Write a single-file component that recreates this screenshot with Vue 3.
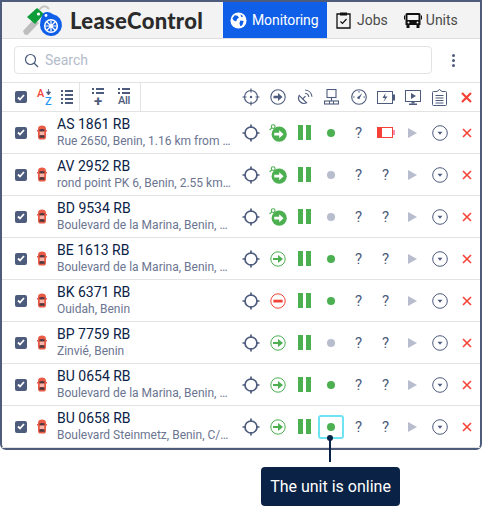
<template>
  <div class="page">
    <!-- shared icons -->
    <svg class="defs" width="0" height="0">
      <symbol id="target" viewBox="0 0 18 18">
        <circle cx="9" cy="9" r="6.5" fill="none" stroke="currentColor" stroke-width="1.2"/>
        <path d="M9 0.5v4M9 13.5v4M0.5 9h4M13.5 9h4" stroke="currentColor" stroke-width="1.2"/>
        <circle cx="9" cy="9" r="1.2" fill="currentColor"/>
      </symbol>
      <symbol id="locate" viewBox="0 0 18 18">
        <circle cx="9" cy="9" r="6" fill="none" stroke="currentColor" stroke-width="1.7"/>
        <path d="M9 0.5v3.5M9 14v3.5M0.5 9h3.5M14 9h3.5" stroke="currentColor" stroke-width="1.7"/>
      </symbol>
      <symbol id="arrow" viewBox="0 0 16 16">
        <circle cx="8" cy="8" r="7.2" fill="none" stroke="currentColor" stroke-width="1.1"/>
        <path d="M3.5 6.7h4.5V4l4.5 4-4.5 4V9.3H3.5z" fill="currentColor"/>
      </symbol>
      <symbol id="moving" viewBox="0 0 18 18">
        <circle cx="4.2" cy="2.6" r="1.9" fill="none" stroke="#4caf50" stroke-width="1.1"/>
        <path d="M2.800 3.800L0.600 6" stroke="#4caf50" stroke-width="1.1"/>
        <circle cx="10.200" cy="10.200" r="7.600" fill="#4caf50"/>
        <path d="M5.200 8.800h5V6.200l4.400 4-4.400 4v-2.600h-5z" fill="#fff"/>
      </symbol>
      <symbol id="stop" viewBox="0 0 16 16">
        <circle cx="8" cy="8" r="7.2" fill="#fff" stroke="#f44336" stroke-width="1"/>
        <rect x="3.4" y="6.7" width="9.2" height="2.8" fill="#f44336"/>
      </symbol>
      <symbol id="moving-out" viewBox="0 0 16 16">
        <circle cx="8" cy="8" r="7.2" fill="#fff" stroke="#4caf50" stroke-width="1"/>
        <path d="M3 6.900h5V4l5 4-5 4V9.100H3z" fill="#4caf50"/>
      </symbol>
      <symbol id="car" viewBox="0 0 10 15">
        <path d="M2.200 1.200Q5 -0.200 7.800 1.200Q9 2 9 4V12Q9 14 7.400 14.500H2.600Q1 14 1 12V4Q1 2 2.200 1.200z" fill="#ea5a45"/>
        <path d="M0 5h1v1.400H0zM9 5h1v1.400H9z" fill="#ea5a45"/>
        <path d="M2.200 4.400Q5 3.400 7.800 4.400L7.200 6.400H2.800z" fill="#4a3a40"/>
        <path d="M2.800 10.200H7.200L7.800 12.400Q5 13.200 2.200 12.400z" fill="#4a3a40"/>
        <rect x="2.800" y="6.600" width="4.400" height="3.400" fill="#f6b5a8"/>
      </symbol>
    </svg>

    <div class="frame">
      <header class="top">
        <div class="brand">
          <svg class="logo" width="42" height="33" viewBox="0 0 42 33">
            <path d="M17 6Q22 -1 27 5" fill="none" stroke="#c4c4c4" stroke-width="2"/>
            <path d="M12 15L1 27l1.500 3.500 3 0.500L17 19z" fill="#bdbdbd"/>
            <path d="M5 13L15 4l7 6-9 10z" fill="#0f9d3a"/>
            <circle cx="16.500" cy="10" r="1.600" fill="#fff"/>
            <path d="M20 12Q21 8 25 8Q28 8 31 10.200A11 11 0 1 1 18 21Q18 16 20 12z" fill="#0f5fe8"/>
            <circle cx="24" cy="11.500" r="1.400" fill="#fff"/>
            <circle cx="29" cy="22" r="6.300" fill="none" stroke="#fff" stroke-width="1.600"/>
            <circle cx="29" cy="22" r="1.700" fill="#fff"/>
            <path d="M29 16.500v11M23.500 22h11M25 18l8 8M33 18l-8 8" stroke="#fff" stroke-width="1.200"/>
          </svg>
          <span class="brand-name">LeaseControl</span>
        </div>
        <nav class="tabs">
          <a class="tab active">
            <svg width="17" height="17" viewBox="0 0 18 18">
              <circle cx="9" cy="9" r="8.500" fill="#fff"/>
              <path d="M5 3.500l3 .5 1.500 2-2 1.500-1 2.500L4 9 2.500 7zM11 9l3.500.5-1.500 4.500-2 1-1-3zM11 2.500l3 2-2 1z" fill="#0f5fe8"/>
            </svg>
            Monitoring
          </a>
          <a class="tab jobs">
            <svg width="15" height="17" viewBox="0 0 15 17">
              <path d="M4 2H1v14h13V2h-3" fill="none" stroke="#111" stroke-width="1.300"/>
              <rect x="4" y="0.500" width="7" height="3" fill="#111"/>
              <path d="M4.500 9.500l2 2 4-4.500" fill="none" stroke="#111" stroke-width="1.200"/>
            </svg>
            Jobs
          </a>
          <a class="tab units">
            <svg width="18" height="16" viewBox="0 0 18 16">
              <path d="M3 1h12q1.500 0 1.500 1.500V13H1.500V2.500Q1.500 1 3 1z" fill="#111"/>
              <rect x="3.500" y="3" width="11" height="5" fill="#f3f3f3"/>
              <rect x="0" y="3.500" width="1" height="4" fill="#111"/>
              <rect x="17" y="3.500" width="1" height="4" fill="#111"/>
              <rect x="2.500" y="13" width="3" height="3" fill="#111"/>
              <rect x="12.500" y="13" width="3" height="3" fill="#111"/>
              <circle cx="4.500" cy="10.500" r="1" fill="#f3f3f3"/>
              <circle cx="13.500" cy="10.500" r="1" fill="#f3f3f3"/>
            </svg>
            Units
          </a>
        </nav>
      </header>

      <div class="search-row">
        <label class="search">
          <svg width="15" height="15" viewBox="0 0 15 15">
            <circle cx="6.500" cy="6.500" r="5" fill="none" stroke="#4d5b7c" stroke-width="1.200"/>
            <path d="M10 10l4 4" stroke="#4d5b7c" stroke-width="1.200"/>
          </svg>
          <input type="text" placeholder="Search">
        </label>
        <div class="kebab"><i></i><i></i><i></i></div>
      </div>

      <div class="toolbar">
        <div class="group first">
          <span class="check"><svg width="8" height="7" viewBox="0 0 8 7"><path d="M1 3.500l2 2 4-4.500" fill="none" stroke="#fff" stroke-width="1.800"/></svg></span>
          <span class="sort">
            <b class="az-a">A</b><b class="az-z">Z</b>
            <svg class="az-arrow" width="5" height="6" viewBox="0 0 5 6"><path d="M2.500 0v3M0.500 3h4L2.500 6z" fill="#4d5b7c" stroke="#4d5b7c" stroke-width="0.800"/></svg>
          </span>
          <span class="lines">
            <i v-for="n in 4" :key="n"></i>
          </span>
        </div>
        <div class="group second">
          <span class="add-lines"><i></i><i></i><em>+</em></span>
          <span class="add-lines all"><i></i><i></i><em>All</em></span>
        </div>
        <div class="cols">
          <span class="cell"><svg width="18" height="18"><use href="#target"/></svg></span>
          <span class="cell"><svg width="16" height="16"><use href="#arrow"/></svg></span>
          <span class="cell">
            <svg width="17" height="17" viewBox="0 0 17 17">
              <path d="M3.200 6.400a5.500 5.500 0 0 0 7.400 7.400z" fill="none" stroke="currentColor" stroke-width="1.200"/>
              <path d="M6.500 10.200l3-3" stroke="currentColor" stroke-width="1.200"/>
              <path d="M9 4.200a4.200 4.200 0 0 1 3.800 3.800M9.200 1a7.500 7.500 0 0 1 6.800 6.800" fill="none" stroke="currentColor" stroke-width="1.100"/>
            </svg>
          </span>
          <span class="cell">
            <svg width="15" height="16" viewBox="0 0 15 16">
              <rect x="3" y="0.500" width="9" height="8" fill="none" stroke="currentColor" stroke-width="1.100"/>
              <path d="M7.500 8.500V12" stroke="currentColor" stroke-width="1.100"/>
              <rect x="0.500" y="12" width="14" height="3" fill="none" stroke="currentColor" stroke-width="1.100"/>
              <path d="M5.500 12v3M9.500 12v3" stroke="currentColor" stroke-width="1"/>
            </svg>
          </span>
          <span class="cell">
            <svg width="16" height="16" viewBox="0 0 16 16">
              <circle cx="8" cy="8" r="7.300" fill="none" stroke="currentColor" stroke-width="1.100"/>
              <path d="M8 2v1.600M2 8h1.600M12.400 8H14" stroke="currentColor" stroke-width="1"/>
              <path d="M6.700 8.200L11.200 4.200 8.600 9.500z" fill="currentColor"/>
              <circle cx="7.600" cy="8.800" r="1.300" fill="currentColor"/>
            </svg>
          </span>
          <span class="cell">
            <svg width="18" height="13" viewBox="0 0 18 13">
              <rect x="0.500" y="0.500" width="15" height="12" fill="none" stroke="currentColor" stroke-width="1"/>
              <rect x="16" y="3.500" width="2" height="6" fill="currentColor"/>
              <path d="M8.500 2L5.500 7h2.500L6.500 11l4-5.500H8z" fill="currentColor"/>
            </svg>
          </span>
          <span class="cell">
            <svg width="16" height="15" viewBox="0 0 16 15">
              <rect x="0.500" y="0.500" width="15" height="11" fill="none" stroke="currentColor" stroke-width="1"/>
              <path d="M6 3l5 3-5 3z" fill="currentColor"/>
              <rect x="6.500" y="11.500" width="3" height="2" fill="currentColor"/>
              <rect x="4" y="13.500" width="8" height="1.500" fill="currentColor"/>
            </svg>
          </span>
          <span class="cell">
            <svg width="15" height="17" viewBox="0 0 15 17">
              <path d="M5 2.500H1.500Q.5 2.500.5 3.500v12Q.5 16.500 1.500 16.500h12q1 0 1-1v-12q0-1-1-1H10L7.500.5z" fill="none" stroke="currentColor" stroke-width="1"/>
              <path d="M3.500 6.500h8M3.500 9h8M3.500 11.500h8M3.500 14h8" stroke="currentColor" stroke-width="1"/>
            </svg>
          </span>
          <span class="cell">
            <svg width="11" height="11" viewBox="0 0 11 11"><path d="M1 1l9 9M10 1l-9 9" stroke="#f44336" stroke-width="2.200"/></svg>
          </span>
        </div>
      </div>

      <div v-for="unit in units" :key="unit.name" class="row">
        <span class="check"><svg width="8" height="7" viewBox="0 0 8 7"><path d="M1 3.500l2 2 4-4.500" fill="none" stroke="#fff" stroke-width="1.800"/></svg></span>
        <svg class="car" width="10" height="15"><use href="#car"/></svg>
        <div class="info">
          <div class="name">{{ unit.name }}</div>
          <div class="addr">{{ unit.addr }}</div>
        </div>
        <div class="cols">
          <span class="cell"><svg width="18" height="18"><use href="#locate"/></svg></span>
          <span class="cell">
            <svg v-if="unit.move === 'moving'" width="18" height="18"><use href="#moving"/></svg>
            <svg v-else width="16" height="16"><use :href="'#' + unit.move"/></svg>
          </span>
          <span class="cell">
            <span class="pause"><i></i><i></i></span>
          </span>
          <span class="cell" :class="{ focus: unit.focus }">
            <i class="dot" :class="{ on: unit.online }"></i>
          </span>
          <span class="cell q">?</span>
          <span class="cell q">
            <svg v-if="unit.lowBatt" width="18" height="11" viewBox="0 0 18 11">
              <rect x="0.500" y="0.500" width="15" height="10" fill="#fff" stroke="#f44336"/>
              <rect x="1" y="1" width="4" height="9" fill="#f44336"/>
              <rect x="16" y="3" width="2" height="5" fill="#f48fb1"/>
            </svg>
            <template v-else>?</template>
          </span>
          <span class="cell"><i class="play"></i></span>
          <span class="cell">
            <svg width="16" height="16" viewBox="0 0 16 16">
              <circle cx="8" cy="8" r="7.300" fill="none" stroke="currentColor" stroke-width="1"/>
              <path d="M5.500 6.800h5L8 9.800z" fill="currentColor"/>
            </svg>
          </span>
          <span class="cell">
            <svg width="10" height="10" viewBox="0 0 10 10"><path d="M1 1l8 8M9 1l-8 8" stroke="#f44336" stroke-width="1.600"/></svg>
          </span>
        </div>
      </div>

      <!-- callout for the status dot -->
      <div class="callout">
        <i class="pin"></i>
        <i class="stem"></i>
        <div class="tip">The unit is online</div>
      </div>
    </div>
  </div>
</template>

<script setup>
const marina = 'Boulevard de la Marina, Benin, C/1234 Cotonou, Littoral'

const units = [
  { name: 'AS 1861 RB', addr: 'Rue 2650, Benin, 1.16 km from the centre', move: 'moving', online: true, lowBatt: true },
  { name: 'AV 2952 RB', addr: 'rond point PK 6, Benin, 2.55 km from the centre', move: 'moving', online: false },
  { name: 'BD 9534 RB', addr: marina, move: 'moving', online: false },
  { name: 'BE 1613 RB', addr: marina, move: 'moving-out', online: true },
  { name: 'BK 6371 RB', addr: 'Ouidah, Benin', move: 'stop', online: true },
  { name: 'BP 7759 RB', addr: 'Zinvié, Benin', move: 'moving-out', online: false },
  { name: 'BU 0654 RB', addr: marina, move: 'moving-out', online: true },
  { name: 'BU 0658 RB', addr: 'Boulevard Steinmetz, Benin, C/1234 Cotonou', move: 'moving-out', online: true, focus: true }
]
</script>

<style>
body {
  margin: 0;
  background: #fff;
}
</style>

<style scoped>
.page {
  width: 482px;
  height: 508px;
  overflow: hidden;
  font-family: Roboto, "Liberation Sans", sans-serif;
}

.defs {
  position: absolute;
}

.frame {
  position: relative;
  box-sizing: border-box;
  width: 482px;
  background: #fff;
  border: 2px solid #4d5b7c;
  border-radius: 0 0 6px 6px;
}

.top {
  display: flex;
  height: 37px;
  box-sizing: border-box;
  background: #f3f3f3;
  border-bottom: 1px solid #dedede;
}

.brand {
  display: flex;
  align-items: center;
  width: 221px;
  padding-left: 20px;
  box-sizing: border-box;
}

.logo {
  flex: none;
}

.brand-name {
  margin-left: 6px;
  font-family: Lato, sans-serif;
  font-weight: 900;
  font-size: 22px;
  letter-spacing: 0.3px;
  color: #2b2b2b;
}

.tabs {
  display: flex;
}

.tab {
  display: flex;
  align-items: center;
  gap: 6px;
  height: 36px;
  font-size: 14px;
  color: #4a4a4a;
}

.tab.active {
  width: 104px;
  box-sizing: border-box;
  padding-left: 7px;
  gap: 5px;
  background: #0f5fe8;
  color: #fff;
  letter-spacing: -0.1px;
}

.jobs {
  margin-left: 9px;
}

.units {
  margin-left: 16px;
  gap: 4px;
}

.search-row {
  display: flex;
  align-items: center;
  height: 44px;
  box-sizing: border-box;
  padding: 7px 0 8px 12px;
  border-bottom: 1px solid #e3e3e3;
}

.search {
  display: flex;
  align-items: center;
  gap: 6px;
  width: 418px;
  height: 28px;
  box-sizing: border-box;
  padding-left: 9px;
  border: 1px solid #e3e3e3;
  border-radius: 4px;
}

.search input {
  flex: 1;
  min-width: 0;
  border: 0;
  outline: 0;
  padding: 0;
  font: 14px Roboto, sans-serif;
}

.search input::placeholder {
  color: #b4bbcb;
  opacity: 1;
}

.kebab {
  display: flex;
  flex-direction: column;
  gap: 2px;
  margin-left: 20px;
}

.kebab i {
  width: 3px;
  height: 3px;
  border-radius: 50%;
  background: #4d5b7c;
}

.toolbar {
  display: flex;
  align-items: center;
  height: 29px;
  box-sizing: border-box;
  border-bottom: 1px solid #e3e3e3;
}

.group {
  display: flex;
  align-items: center;
  height: 28px;
  box-sizing: border-box;
  border-right: 1px solid #e3e3e3;
}

.group.first {
  width: 78px;
  padding-left: 13px;
}

.group.second {
  width: 61px;
  padding-left: 12px;
  gap: 14px;
}

.check {
  flex: none;
  display: flex;
  align-items: center;
  justify-content: center;
  width: 12px;
  height: 12px;
  border-radius: 2px;
  background: #4d5b7c;
}

.sort {
  position: relative;
  width: 16px;
  height: 18px;
  margin-left: 10px;
  font-size: 11px;
  line-height: 11px;
}

.az-a {
  position: absolute;
  left: 0;
  top: 0;
  font-weight: 500;
  color: #f44336;
}

.az-z {
  position: absolute;
  left: 8px;
  top: 8px;
  font-weight: 500;
  color: #2196f3;
}

.az-arrow {
  position: absolute;
  left: 9px;
  top: 1px;
}

.lines {
  display: flex;
  flex-direction: column;
  gap: 2px;
  width: 12px;
  margin-left: 8px;
}

.lines i {
  height: 2px;
  background: linear-gradient(to right, #4d5b7c 2px, transparent 2px, transparent 4px, #4d5b7c 4px);
}

.add-lines {
  display: flex;
  flex-direction: column;
  align-items: center;
  width: 12px;
  gap: 2px;
}

.add-lines i {
  width: 12px;
  height: 2px;
  background: linear-gradient(to right, #4d5b7c 2px, transparent 2px, transparent 4px, #4d5b7c 4px);
}

.add-lines em {
  font-style: normal;
  font-weight: 700;
  font-size: 15px;
  line-height: 10px;
  color: #4d5b7c;
}

.add-lines.all em {
  font-weight: 500;
  font-size: 11px;
  letter-spacing: -0.3px;
  line-height: 10px;
}

.cols {
  display: flex;
  margin-left: auto;
  color: #4d5b7c;
}

.cell {
  position: relative;
  display: flex;
  align-items: center;
  justify-content: center;
  width: 27px;
  height: 24px;
  box-sizing: border-box;
}

.row {
  display: flex;
  align-items: center;
  height: 42px;
  box-sizing: border-box;
  padding-left: 13px;
  border-bottom: 1px solid #e3e3e3;
}

.row:last-of-type {
  border-bottom: 0;
  height: 41px;
}

.car {
  flex: none;
  margin-left: 10px;
}

.info {
  width: 175px;
  margin-left: 10px;
  min-width: 0;
}

.name {
  font-size: 14px;
  line-height: 17px;
  color: #0a2245;
}

.addr {
  font-size: 12px;
  line-height: 16px;
  color: #6b7591;
  white-space: nowrap;
  overflow: hidden;
  text-overflow: ellipsis;
}

.pause {
  display: flex;
  gap: 3px;
}

.pause i {
  width: 5px;
  height: 15px;
  background: #4caf50;
}

.dot {
  width: 8px;
  height: 8px;
  margin-right: 1px;
  border-radius: 50%;
  background: #b7bdcc;
}

.dot.on {
  background: #4caf50;
}

.focus::after {
  content: "";
  position: absolute;
  left: 0;
  top: 0;
  width: 26px;
  height: 24px;
  box-sizing: border-box;
  border: 2px solid #6fe3f4;
  border-radius: 3px;
}

.q {
  font-size: 15px;
  color: #4d5b7c;
}

.play {
  width: 0;
  height: 0;
  border-left: 9px solid #b7bdcc;
  border-top: 5px solid transparent;
  border-bottom: 5px solid transparent;
}

.callout {
  position: absolute;
  left: 259px;
  top: 433px;
  width: 139px;
  display: flex;
  flex-direction: column;
  align-items: center;
}

.pin {
  width: 6px;
  height: 6px;
  margin-right: 1px;
  border-radius: 50%;
  background: #0a2245;
}

.stem {
  width: 2px;
  height: 22px;
  margin-top: -1px;
  margin-right: 1px;
  background: #0a2245;
}

.tip {
  box-sizing: border-box;
  width: 139px;
  height: 39px;
  margin-top: 5px;
  border-radius: 4px;
  background: #0a2245;
  color: #fff;
  font-size: 16px;
  line-height: 39px;
  text-align: center;
}
</style>
